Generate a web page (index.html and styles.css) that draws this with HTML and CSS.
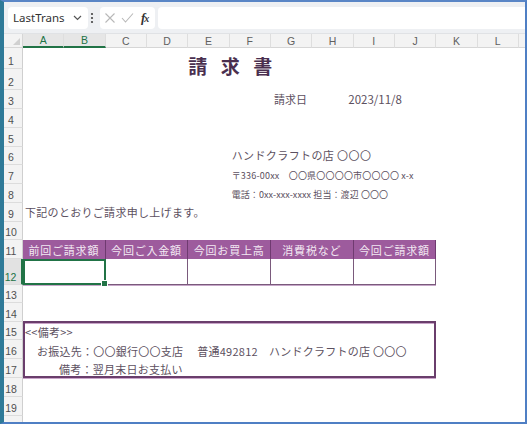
FILE: index.html
```html
<!DOCTYPE html>
<html lang="ja">
<head>
<meta charset="utf-8">
<title>請求書</title>
<link rel="stylesheet" href="styles.css">
</head>
<body>
<div class="window">
  <div class="fbar">
    <div class="namebox">
      <span class="name">LastTrans</span>
      <svg class="chev" width="9" height="6" viewBox="0 0 9 6"><polyline points="1,1 4.5,4.5 8,1" fill="none" stroke="#555" stroke-width="1.2"/></svg>
    </div>
    <svg class="dots" width="4" height="12" viewBox="0 0 4 12"><circle cx="2" cy="2" r="1.1" fill="#444"/><circle cx="2" cy="6" r="1.1" fill="#444"/><circle cx="2" cy="10" r="1.1" fill="#444"/></svg>
    <div class="fxbox">
      <svg width="12" height="12" viewBox="0 0 12 12"><path d="M1.5 1.5 L10.5 10.5 M10.5 1.5 L1.5 10.5" stroke="#b8b8b8" stroke-width="1.1" fill="none"/></svg>
      <svg width="13" height="12" viewBox="0 0 13 12"><path d="M1 6 L4.5 10 L12 1.5" stroke="#b8b8b8" stroke-width="1.1" fill="none"/></svg>
      <span class="fx"><i>f</i><i class="x">x</i></span>
    </div>
    <div class="finput"></div>
  </div>

  <div class="sheet">
    <div class="corner"><span class="tri"></span></div>
    <div class="ch sel">A</div>
    <div class="ch sel">B</div>
    <div class="ch">C</div>
    <div class="ch">D</div>
    <div class="ch">E</div>
    <div class="ch">F</div>
    <div class="ch">G</div>
    <div class="ch">H</div>
    <div class="ch">I</div>
    <div class="ch">J</div>
    <div class="ch">K</div>
    <div class="ch">L</div>
    <div class="ch rest"></div>

    <div class="rh r1">1</div>
    <div class="rh r2">2</div>
    <div class="rh r3">3</div>
    <div class="rh r4">4</div>
    <div class="rh r5">5</div>
    <div class="rh r6">6</div>
    <div class="rh r7">7</div>
    <div class="rh r8">8</div>
    <div class="rh r9">9</div>
    <div class="rh r10">10</div>
    <div class="rh r11">11</div>
    <div class="rh r12 sel">12</div>
    <div class="rh r13">13</div>
    <div class="rh r14">14</div>
    <div class="rh r15">15</div>
    <div class="rh r16">16</div>
    <div class="rh r17">17</div>
    <div class="rh r18">18</div>
    <div class="rh r19">19</div>
    <div class="rh r20"></div>

    <div class="title">請求書</div>
    <div class="txt date-label">請求日</div>
    <div class="txt date">2023/11/8</div>
    <div class="txt shop">ハンドクラフトの店 〇〇〇</div>
    <div class="small addr">〒336-00xx　〇〇県〇〇〇〇市〇〇〇〇 x-x</div>
    <div class="small tel">電話：0xx-xxx-xxxx 担当：渡辺 〇〇〇</div>
    <div class="txt lead">下記のとおりご請求申し上げます。</div>

    <div class="th c1">前回ご請求額</div>
    <div class="th c2">今回ご入金額</div>
    <div class="th c3">今回お買上高</div>
    <div class="th c4">消費税など</div>
    <div class="th c5">今回ご請求額</div>

    <div class="td c1 active"><span class="handle"></span></div>
    <div class="td c2"></div>
    <div class="td c3"></div>
    <div class="td c4"></div>
    <div class="td c5"></div>

    <div class="remarks">
      <div class="rline l1">&lt;&lt;備考&gt;&gt;</div>
      <div class="rline l2">お振込先：〇〇銀行〇〇支店　 普通492812　ハンドクラフトの店 〇〇〇</div>
      <div class="rline l3">備考：翌月末日お支払い</div>
    </div>
  </div>
</div>
</body>
</html>
```

FILE: styles.css
```css
html, body {
  margin: 0;
  padding: 0;
  background: #ffffff;
}

.window {
  box-sizing: border-box;
  width: 527px;
  height: 424px;
  border-top: 2px solid #5a86c6;
  border-left: 4px solid #2f7a98;
  border-right: 2px solid #4f7fc4;
  border-bottom: 2px solid #4f7fc4;
  background: #ffffff;
  overflow: hidden;
  display: flex;
  flex-direction: column;
}

/* formula bar */
.fbar {
  height: 32px;
  flex: none;
  display: flex;
  align-items: center;
  padding-left: 4px;
  background: #eef0f3;
  border-bottom: 1px solid #e0e2e5;
  box-sizing: border-box;
}

.namebox {
  width: 80px;
  height: 22px;
  box-sizing: border-box;
  background: #ffffff;
  border-radius: 4px;
  display: flex;
  align-items: center;
  padding-left: 5px;
  gap: 8px;
}

.name {
  font-family: "Noto Sans", "Open Sans", sans-serif;
  font-size: 11.5px;
  color: #333333;
}

.dots {
  margin-left: 2px;
}

.fxbox {
  margin-left: 6px;
  width: 55px;
  height: 22px;
  box-sizing: border-box;
  background: #ffffff;
  border-radius: 4px;
  display: flex;
  align-items: center;
  padding-left: 4px;
  gap: 5px;
}

.fx {
  font-family: "Liberation Serif", "DejaVu Serif", serif;
  font-size: 13px;
  font-weight: bold;
  color: #333333;
  letter-spacing: -1px;
  margin-left: 2px;
}

.fx .x {
  font-size: 10px;
}

.finput {
  margin-left: 3px;
  flex: 1;
  height: 22px;
  background: #ffffff;
  border-radius: 4px 0 0 4px;
}

/* sheet grid */
.sheet {
  flex: 1;
  display: grid;
  grid-template-columns: 19px repeat(12, 41.33px) 1fr;
  grid-template-rows: 14px 21px 21px 19px 19px 19px 18px 19px 19px 19px 18px 19px 26px 18px 19px 18px 19px 19px 19px 19px 1fr;
  font-family: "Noto Sans CJK JP", "Noto Sans", sans-serif;
  color: #5c5060;
}

.corner {
  grid-column: 1;
  grid-row: 1;
  background: #f3f3f3;
  border-right: 1px solid #d6d6d6;
  border-bottom: 1px solid #d6d6d6;
  position: relative;
}

.tri {
  position: absolute;
  right: 2px;
  bottom: 2px;
  width: 0;
  height: 0;
  border-left: 7px solid transparent;
  border-bottom: 7px solid #d0d0d0;
}

.ch {
  grid-row: 1;
  background: #f3f3f3;
  border-right: 1px solid #dedede;
  border-bottom: 1px solid #d6d6d6;
  font-family: "Liberation Sans", "Noto Sans", sans-serif;
  font-size: 10.5px;
  color: #606060;
  display: flex;
  align-items: center;
  justify-content: center;
  line-height: 1;
  padding-top: 1px;
  box-sizing: border-box;
}

.ch.sel {
  background: #e6e6e6;
  color: #217346;
  border-bottom: 2px solid #217346;
}

.ch.rest {
  border-right: none;
}

.rh {
  grid-column: 1;
  background: #f3f3f3;
  border-right: 1px solid #cfcfcf;
  border-bottom: 1px solid #dcdcdc;
  font-family: "Liberation Sans", "Noto Sans", sans-serif;
  font-size: 10.5px;
  color: #505050;
  display: flex;
  align-items: flex-end;
  justify-content: center;
  padding-right: 4px;
  padding-bottom: 1px;
  line-height: 12px;
  box-sizing: border-box;
}

.rh.sel {
  background: #e2e2e2;
  color: #217346;
  border-right: 2px solid #217346;
}

.r1 { grid-row: 2; }
.r2 { grid-row: 3; }
.r3 { grid-row: 4; }
.r4 { grid-row: 5; }
.r5 { grid-row: 6; }
.r6 { grid-row: 7; }
.r7 { grid-row: 8; }
.r8 { grid-row: 9; }
.r9 { grid-row: 10; }
.r10 { grid-row: 11; }
.r11 { grid-row: 12; }
.r12 { grid-row: 13; }
.r13 { grid-row: 14; }
.r14 { grid-row: 15; }
.r15 { grid-row: 16; }
.r16 { grid-row: 17; }
.r17 { grid-row: 18; }
.r18 { grid-row: 19; }
.r19 { grid-row: 20; }
.r20 { grid-row: 21; border-bottom: none; }

/* content */
.title {
  grid-column: 6 / span 4;
  grid-row: 2 / span 2;
  align-self: start;
  margin-top: 8px;
  font-size: 19px;
  line-height: 20px;
  font-weight: bold;
  letter-spacing: 13.5px;
  color: #4a2f4f;
  white-space: nowrap;
}

.txt {
  font-size: 11px;
  line-height: 14px;
  align-self: end;
  padding-bottom: 3px;
  white-space: nowrap;
}

.small {
  font-size: 9px;
  line-height: 12px;
  align-self: end;
  padding-bottom: 2px;
  padding-left: 2px;
  white-space: nowrap;
}

.date-label {
  grid-column: 8 / span 2;
  grid-row: 4;
  padding-left: 3px;
}

.date {
  grid-column: 9 / span 3;
  grid-row: 4;
  padding-left: 36px;
  font-size: 11.5px;
}

.shop {
  grid-column: 7 / span 6;
  grid-row: 7;
  padding-left: 2px;
  letter-spacing: 0.4px;
}

.addr {
  grid-column: 7 / span 6;
  grid-row: 8;
  letter-spacing: 0.2px;
}

.tel {
  grid-column: 7 / span 6;
  grid-row: 9;
  letter-spacing: 0.1px;
}

.lead {
  grid-column: 2 / span 8;
  grid-row: 10;
  padding-left: 2px;
  letter-spacing: 0.3px;
}

.th {
  grid-row: 12;
  background: #9d5b9d;
  color: #f3e9f3;
  font-size: 11px;
  letter-spacing: 0.8px;
  display: flex;
  align-items: center;
  justify-content: center;
  border-right: 1px solid #6f3a70;
  box-sizing: border-box;
}

.td {
  grid-row: 13;
  border-right: 1px solid #7a5a7c;
  border-bottom: 1px solid #7a5a7c;
  box-shadow: 0 1px 0 #c6a6c8;
  box-sizing: border-box;
}

.c1 { grid-column: 2 / span 2; border-left: 1px solid #7a5a7c; }
.c2 { grid-column: 4 / span 2; }
.c3 { grid-column: 6 / span 2; }
.c4 { grid-column: 8 / span 2; }
.c5 { grid-column: 10 / span 2; }

.th.c1 { border-left: none; }

.td.active {
  border: 2px solid #217346;
  position: relative;
}

.handle {
  position: absolute;
  right: -4px;
  bottom: -4px;
  width: 5px;
  height: 5px;
  background: #217346;
  border: 1px solid #ffffff;
}

.remarks {
  grid-column: 2 / 12;
  grid-row: 16 / 19;
  margin-top: -1px;
  border: 2px solid #6a3e6c;
  box-shadow: 0 1px 0 #c9a4c9, inset 0 1px 0 #c9a4c9;
  display: flex;
  flex-direction: column;
  font-size: 11px;
  white-space: nowrap;
}

.rline {
  line-height: 14px;
  letter-spacing: 0.25px;
}

.l1 {
  height: 18px;
  padding-left: 0px;
  padding-top: 2px;
  box-sizing: border-box;
}

.l2 {
  height: 19px;
  padding-left: 12px;
  padding-top: 4px;
  box-sizing: border-box;
}

.l3 {
  height: 18px;
  padding-left: 34px;
  padding-top: 3px;
  box-sizing: border-box;
}
```
